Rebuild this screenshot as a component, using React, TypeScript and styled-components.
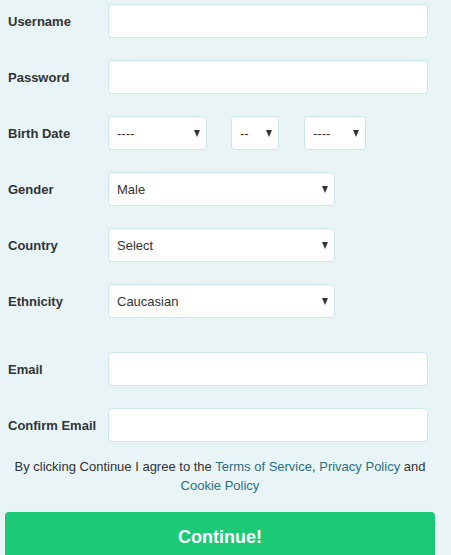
import React from 'react';
import styled, { createGlobalStyle } from 'styled-components';

const GlobalStyle = createGlobalStyle`
  html, body {
    margin: 0;
    padding: 0;
    background: #e8f4f6;
  }
  body {
    font-family: 'Liberation Sans', Arial, sans-serif;
    font-size: 13px;
    color: #333;
  }
`;

const Form = styled.form`
  width: 440px;
  padding: 4px 0 0 5px;
  display: flex;
  flex-direction: column;
`;

const Row = styled.div<{ $spaced?: boolean }>`
  display: flex;
  align-items: center;
  height: 34px;
  margin-bottom: 22px;
  margin-top: ${(p) => (p.$spaced ? '12px' : '0')};
  &:last-of-type {
    margin-bottom: 0;
  }
`;

const Label = styled.label`
  width: 103px;
  padding-left: 3px;
  box-sizing: border-box;
  font-weight: bold;
  font-size: 13px;
  color: #333;
  white-space: nowrap;
`;

const TextInput = styled.input`
  width: 320px;
  height: 34px;
  box-sizing: border-box;
  border: 1px solid #c9e7ec;
  border-radius: 4px;
  background: #fff;
  outline: none;
  padding: 0 9px;
  font: inherit;
`;

const SelectWrap = styled.div<{ $w: number; $ml?: number }>`
  position: relative;
  width: ${(p) => p.$w}px;
  margin-left: ${(p) => p.$ml ?? 0}px;
  height: 34px;
`;

const Select = styled.select`
  appearance: none;
  -webkit-appearance: none;
  width: 100%;
  height: 100%;
  box-sizing: border-box;
  border: 1px solid #c9e7ec;
  border-radius: 4px;
  background: #fff;
  padding: 0 20px 0 8px;
  font-family: 'Liberation Sans', Arial, sans-serif;
  font-size: 13px;
  color: #333;
  outline: none;
`;

const Arrow = styled.span`
  position: absolute;
  right: 7px;
  top: 14px;
  width: 0;
  height: 0;
  border-left: 3.5px solid transparent;
  border-right: 3.5px solid transparent;
  border-top: 7px solid #333;
  pointer-events: none;
`;

const Terms = styled.p`
  margin: 16px 0 0 0;
  width: 430px;
  text-align: center;
  line-height: 18.6px;
  font-size: 13px;
  color: #333;
`;

const Link = styled.a`
  color: #2b6f80;
  text-decoration: none;
`;

const Continue = styled.button`
  margin-top: 17px;
  width: 430px;
  height: 50px;
  border: none;
  border-radius: 4px;
  background: #1bc977;
  color: #fff;
  font-family: 'Liberation Sans', Arial, sans-serif;
  font-weight: bold;
  font-size: 18px;
  padding: 0;
  cursor: pointer;
`;

type Opt = { w: number; ml?: number; value: string };

const Dropdown = ({ w, ml, value }: Opt) => (
  <SelectWrap $w={w} $ml={ml}>
    <Select defaultValue={value}>
      <option>{value}</option>
    </Select>
    <Arrow />
  </SelectWrap>
);

export default function App() {
  return (
    <>
      <GlobalStyle />
      <Form onSubmit={(e) => e.preventDefault()}>
        <Row>
          <Label>Username</Label>
          <TextInput type="text" />
        </Row>
        <Row>
          <Label>Password</Label>
          <TextInput type="password" />
        </Row>
        <Row>
          <Label>Birth Date</Label>
          <Dropdown w={99} value="----" />
          <Dropdown w={48} ml={24} value="--" />
          <Dropdown w={62} ml={25} value="----" />
        </Row>
        <Row>
          <Label>Gender</Label>
          <Dropdown w={227} value="Male" />
        </Row>
        <Row>
          <Label>Country</Label>
          <Dropdown w={227} value="Select" />
        </Row>
        <Row>
          <Label>Ethnicity</Label>
          <Dropdown w={227} value="Caucasian" />
        </Row>
        <Row $spaced>
          <Label>Email</Label>
          <TextInput type="email" />
        </Row>
        <Row>
          <Label>Confirm Email</Label>
          <TextInput type="email" />
        </Row>
        <Terms>
          By clicking Continue I agree to the <Link href="#">Terms of Service</Link>,{' '}
          <Link href="#">Privacy Policy</Link> and <Link href="#">Cookie Policy</Link>
        </Terms>
        <Continue type="submit">Continue!</Continue>
      </Form>
    </>
  );
}
